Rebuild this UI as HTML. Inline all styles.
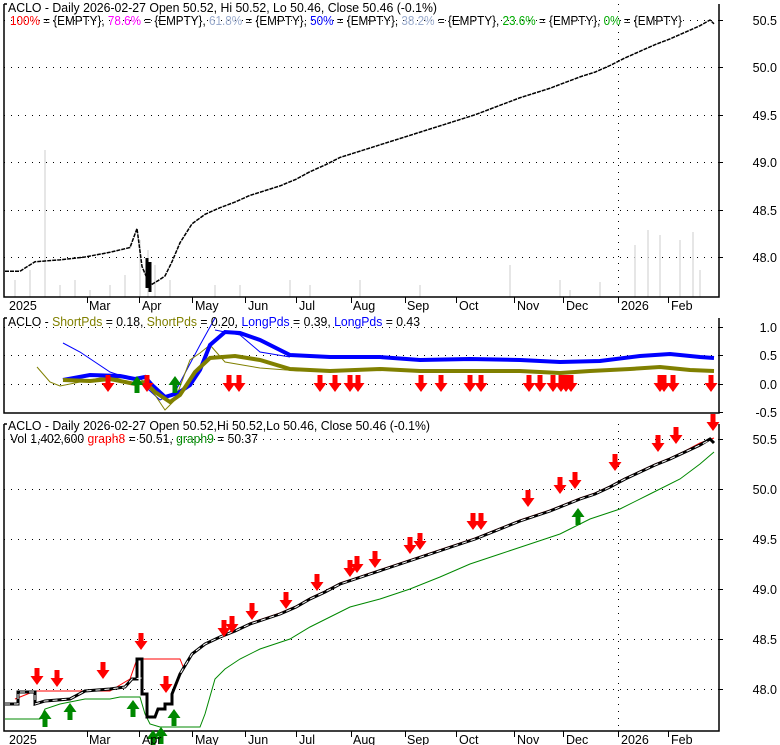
<!DOCTYPE html>
<html><head><meta charset="utf-8"><style>
body{margin:0;background:#fff;}
svg{display:block;font-family:"Liberation Sans",sans-serif;}
</style></head><body>
<svg width="780" height="745" viewBox="0 0 780 745">
<defs>
<g id="dn"><path d="M-2.5,-9 h5 v8 h4 l-6.5,9 l-6.5,-9 h4z" fill="#f00"/></g>
<g id="up"><path d="M-2.5,9 h5 v-8 h4 l-6.5,-9 l-6.5,9 h4z" fill="#080"/></g>
</defs>
<rect width="780" height="745" fill="#fff"/>
<g stroke="#000" stroke-width="1" stroke-dasharray="1,6">
<line x1="4" x2="719" y1="67.5" y2="67.5"/><line x1="4" x2="719" y1="115.5" y2="115.5"/><line x1="4" x2="719" y1="162.5" y2="162.5"/><line x1="4" x2="719" y1="210.5" y2="210.5"/><line x1="4" x2="719" y1="257.5" y2="257.5"/><line x1="4" x2="719" y1="20.5" y2="20.5"/>
<line x1="4" x2="719" y1="327.5" y2="327.5"/><line x1="4" x2="719" y1="355.5" y2="355.5"/><line x1="4" x2="719" y1="384.5" y2="384.5"/>
<line x1="4" x2="719" y1="439.5" y2="439.5"/><line x1="4" x2="719" y1="489.5" y2="489.5"/><line x1="4" x2="719" y1="539.5" y2="539.5"/><line x1="4" x2="719" y1="589.5" y2="589.5"/><line x1="4" x2="719" y1="639.5" y2="639.5"/><line x1="4" x2="719" y1="689.5" y2="689.5"/>
<line x1="618.5" x2="618.5" y1="4" y2="297"/><line x1="618.5" x2="618.5" y1="424" y2="731"/>
</g>
<g stroke="#ddd" stroke-width="1.5">
<path d="M15,297V280M30,297V270M45,297V150M60,297V285M75,297V280M90,297V290M110,297V285M125,297V275M140,297V240M148,297V250M155,297V265M170,297V280M215,297V285M240,297V285M290,297V280M310,297V285M360,297V280M420,297V285M510,297V265M560,297V280M570,297V290M600,297V282M635,297V245M648,297V230M660,297V235M680,297V240M693,297V232M700,297V270"/>
</g>
<g fill="none" stroke="#000" stroke-width="1.5">
<path d="M4,4V297H719V4"/><path d="M4,4h3"/>
<path d="M4,318V413H719V318"/><path d="M4,318h3"/>
<path d="M4,424V731H719V424"/><path d="M4,424h3"/>
</g>
<g stroke="#000" stroke-width="1">
<path d="M87.5,297v6M139.5,297v6M192.5,297v6M245.5,297v6M296.5,297v6M351.5,297v6M405.5,297v6M456.5,297v6M514.5,297v6M563.5,297v6M618.5,297v6M668.5,297v6"/>
<path d="M87.5,731v6M139.5,731v6M192.5,731v6M245.5,731v6M296.5,731v6M351.5,731v6M405.5,731v6M456.5,731v6M514.5,731v6M563.5,731v6M618.5,731v6M668.5,731v6"/>
<path d="M719,20.5h4M719,67.5h4M719,115.5h4M719,162.5h4M719,210.5h4M719,257.5h4M719,327.5h4M719,355.5h4M719,384.5h4M719,412.5h4M719,439.5h4M719,489.5h4M719,539.5h4M719,589.5h4M719,639.5h4M719,689.5h4"/>
</g>
<g transform="matrix(1,0,0,-94.8,0,4807.4)">
<polyline vector-effect="non-scaling-stroke" fill="none" stroke="#000" stroke-width="1.5" stroke-dasharray="4,1" points="5,47.85 20,47.85 35,47.95 60,47.97 85,48.0 110,48.05 130,48.1 137,48.3 142,47.9 150,47.7 158,47.75 165,47.8 172,47.95 180,48.15 192,48.35 205,48.45 220,48.52 235,48.58 250,48.65 265,48.7 280,48.75 296,48.82 310,48.9 325,48.97 340,49.05 355,49.1 370,49.15 385,49.2 400,49.25 415,49.3 430,49.35 445,49.4 460,49.45 475,49.5 490,49.56 505,49.62 520,49.68 535,49.73 550,49.78 565,49.84 580,49.9 595,49.95 610,50.02 625,50.1 640,50.17 655,50.24 670,50.3 685,50.37 700,50.44 710,50.5 714,50.46"/>
</g>
<path d="M147,258v30M150,262v30" stroke="#000" stroke-width="3"/>
<polyline fill="none" stroke="#00f" stroke-width="1" points="63,343 80,352 110,372 140,382 160,400 175,392 200,345 215,318"/>
<polyline fill="none" stroke="#808000" stroke-width="1" points="37,367 50,382 60,386 100,378 140,378 155,395 165,410 175,400 190,360 200,353 210,345 225,362 260,368 300,371"/>
<polyline fill="none" stroke="#00f" stroke-width="1" points="215,330 240,335 260,352 290,357"/>
<polyline fill="none" stroke="#00f" stroke-width="4" points="63,380 90,375 120,376 135,379 145,377 152,385 165,397 178,393 190,385 200,370 210,345 225,332 240,333 260,340 290,355 330,357 380,357 420,360 470,359 520,360 560,362 600,361 640,356 670,354 700,357 714,358"/>
<polyline fill="none" stroke="#808000" stroke-width="4" points="63,380 90,381 110,379 135,384 145,382 155,392 170,402 180,395 195,372 210,358 235,356 260,360 290,369 330,371 380,369 420,371 470,371 520,371 560,373 590,371 630,369 660,367 690,370 714,371"/>
<g>
<use href="#dn" x="108" y="384"/><use href="#dn" x="147" y="384"/><use href="#dn" x="229" y="384"/><use href="#dn" x="239" y="384"/><use href="#dn" x="320" y="384"/><use href="#dn" x="335" y="384"/><use href="#dn" x="350" y="384"/><use href="#dn" x="358" y="384"/><use href="#dn" x="421" y="384"/><use href="#dn" x="441" y="384"/><use href="#dn" x="470" y="384"/><use href="#dn" x="481" y="384"/><use href="#dn" x="529" y="384"/><use href="#dn" x="540" y="384"/><use href="#dn" x="553" y="384"/><use href="#dn" x="561" y="384"/><use href="#dn" x="566" y="384"/><use href="#dn" x="571" y="384"/><use href="#dn" x="660" y="384"/><use href="#dn" x="664" y="384"/><use href="#dn" x="673" y="384"/><use href="#dn" x="711" y="384"/>
<use href="#up" x="137" y="384"/><use href="#up" x="175" y="384"/>
</g>
<g transform="matrix(1,0,0,-100,0,5489)">
<polyline vector-effect="non-scaling-stroke" fill="none" stroke="#080" stroke-width="1" points="5,47.7 40,47.7 45,47.8 60,47.85 70,47.87 85,47.9 110,47.9 120,47.92 140,47.92 145,47.75 150,47.65 160,47.62 200,47.62 205,47.75 215,48.1 225,48.2 240,48.3 260,48.4 290,48.5 310,48.62 330,48.72 350,48.82 380,48.9 410,49.0 440,49.12 470,49.25 500,49.35 530,49.45 560,49.55 590,49.7 620,49.8 650,49.95 680,50.1 700,50.25 714,50.37"/>
<polyline vector-effect="non-scaling-stroke" fill="none" stroke="#f00" stroke-width="1" points="15,47.9 35,47.98 40,47.98 110,47.98 130,48.1 137,48.3 180,48.3 184,48.2 192,48.35 205,48.45 220,48.52 235,48.58 250,48.66 265,48.71 280,48.76 296,48.83 310,48.91 325,48.98 340,49.06 355,49.11 370,49.16 385,49.21 400,49.26 415,49.31 430,49.36 445,49.41 460,49.46 475,49.51 490,49.57 505,49.63 520,49.69 535,49.74 550,49.79 565,49.85 580,49.91 595,49.96 610,50.03 625,50.11 640,50.18 655,50.25 670,50.31 685,50.38 700,50.46 714,50.51"/>
<polyline vector-effect="non-scaling-stroke" fill="none" stroke="#000" stroke-width="3" points="5,47.85 18,47.85 18,47.97 35,47.97 35,47.85 45,47.88 70,47.9 85,47.98 110,48.0 125,48.02 132,48.1 137,48.1 137,48.3 142,48.3 142,47.95 147,47.95 147,47.72 155,47.72 158,47.8 165,47.8 165,47.85 172,47.85 172,47.95 180,48.15 192,48.35 205,48.45 220,48.52 235,48.58 250,48.65 265,48.7 280,48.75 296,48.82 310,48.9 325,48.97 340,49.05 355,49.1 370,49.15 385,49.2 400,49.25 415,49.3 430,49.35 445,49.4 460,49.45 475,49.5 490,49.56 505,49.62 520,49.68 535,49.73 550,49.78 565,49.84 580,49.9 595,49.95 610,50.02 625,50.1 640,50.17 655,50.24 670,50.3 685,50.37 700,50.44 710,50.5 714,50.46"/>
<polyline vector-effect="non-scaling-stroke" fill="none" stroke="#fff" stroke-width="1" points="5,47.85 18,47.85 18,47.97 35,47.97 35,47.85 45,47.88 70,47.9 85,47.98 110,48.0 125,48.02 132,48.1 180,48.15 192,48.35 205,48.45 220,48.52 235,48.58 250,48.65 265,48.7 280,48.75 296,48.82 310,48.9 325,48.97 340,49.05 355,49.1 370,49.15 385,49.2 400,49.25 415,49.3 430,49.35 445,49.4 460,49.45 475,49.5 490,49.56 505,49.62 520,49.68 535,49.73 550,49.78 565,49.84 580,49.9 595,49.95 610,50.02 625,50.1 640,50.17 655,50.24 670,50.3 685,50.37 700,50.44 708,50.48" stroke-dasharray="5,4"/>
</g>
<g>
<use href="#dn" x="37" y="677"/><use href="#dn" x="57" y="679"/><use href="#dn" x="103" y="671"/><use href="#dn" x="141" y="642"/><use href="#dn" x="166" y="685"/><use href="#dn" x="224" y="629"/><use href="#dn" x="232" y="625"/><use href="#dn" x="252" y="612"/><use href="#dn" x="286" y="601"/><use href="#dn" x="317" y="583"/><use href="#dn" x="350" y="569"/><use href="#dn" x="357" y="565"/><use href="#dn" x="375" y="560"/><use href="#dn" x="410" y="546"/><use href="#dn" x="420" y="542"/><use href="#dn" x="473" y="522"/><use href="#dn" x="481" y="522"/><use href="#dn" x="528" y="499"/><use href="#dn" x="560" y="486"/><use href="#dn" x="575" y="481"/><use href="#dn" x="615" y="463"/><use href="#dn" x="658" y="444"/><use href="#dn" x="676" y="436"/><use href="#dn" x="713" y="423"/>
<use href="#up" x="45" y="718"/><use href="#up" x="70" y="711"/><use href="#up" x="133" y="708"/><use href="#up" x="153" y="738"/><use href="#up" x="161" y="735"/><use href="#up" x="174" y="717"/><use href="#up" x="578" y="516"/>
</g>
<g font-size="12.5" fill="#000">
<text x="8" y="12" textLength="429" lengthAdjust="spacingAndGlyphs">ACLO - Daily 2026-02-27 Open 50.52, Hi 50.52, Lo 50.46, Close 50.46 (-0.1%)</text>
<text x="10" y="25" textLength="672" lengthAdjust="spacingAndGlyphs"><tspan fill="#f00">100%</tspan> = {EMPTY}, <tspan fill="#f0f">78.6%</tspan> = {EMPTY}, <tspan fill="#99aacc">61.8%</tspan> = {EMPTY}, <tspan fill="#00f">50%</tspan> = {EMPTY}, <tspan fill="#99aacc">38.2%</tspan> = {EMPTY}, <tspan fill="#0a0">23.6%</tspan> = {EMPTY}, <tspan fill="#0a0">0%</tspan> = {EMPTY}</text>
<text x="8" y="326" textLength="412" lengthAdjust="spacingAndGlyphs">ACLO - <tspan fill="#808000">ShortPds</tspan> = 0.18, <tspan fill="#808000">ShortPds</tspan> = 0.20, <tspan fill="#00f">LongPds</tspan> = 0.39, <tspan fill="#00f">LongPds</tspan> = 0.43</text>
<text x="8" y="430" textLength="422" lengthAdjust="spacingAndGlyphs">ACLO - Daily 2026-02-27 Open 50.52,Hi 50.52,Lo 50.46, Close 50.46 (-0.1%)</text>
<text x="10" y="443" textLength="248" lengthAdjust="spacingAndGlyphs">Vol 1,402,600 <tspan fill="#f00">graph8</tspan> = 50.51, <tspan fill="#080">graph9</tspan> = 50.37</text>
<g>
<text x="9" y="310">2025</text><text x="89" y="310">Mar</text><text x="142" y="310">Apr</text><text x="195" y="310">May</text><text x="248" y="310">Jun</text><text x="299" y="310">Jul</text><text x="353" y="310">Aug</text><text x="407" y="310">Sep</text><text x="459" y="310">Oct</text><text x="517" y="310">Nov</text><text x="566" y="310">Dec</text><text x="621" y="310">2026</text><text x="671" y="310">Feb</text>
</g>
<g>
<text x="9" y="744">2025</text><text x="89" y="744">Mar</text><text x="142" y="744">Apr</text><text x="195" y="744">May</text><text x="248" y="744">Jun</text><text x="299" y="744">Jul</text><text x="353" y="744">Aug</text><text x="407" y="744">Sep</text><text x="459" y="744">Oct</text><text x="517" y="744">Nov</text><text x="566" y="744">Dec</text><text x="621" y="744">2026</text><text x="671" y="744">Feb</text>
</g>
<g text-anchor="end">
<text x="777" y="25">50.5</text><text x="777" y="72">50.0</text><text x="777" y="120">49.5</text><text x="777" y="167">49.0</text><text x="777" y="215">48.5</text><text x="777" y="262">48.0</text>
<text x="777" y="332">1.0</text><text x="777" y="360">0.5</text><text x="777" y="389">0.0</text><text x="777" y="417">-0.5</text>
<text x="777" y="444">50.5</text><text x="777" y="494">50.0</text><text x="777" y="544">49.5</text><text x="777" y="594">49.0</text><text x="777" y="644">48.5</text><text x="777" y="694">48.0</text>
</g>
</g>
</svg>
</body></html>
